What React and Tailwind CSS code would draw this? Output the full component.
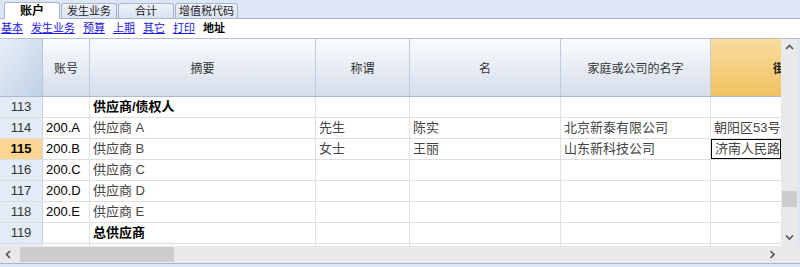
import React from "react";

const font = "font-['Liberation_Sans','Noto_Sans_CJK_SC',sans-serif]";

const tabs = ["账户", "发生业务", "合计", "增值税代码"];
const links = ["基本", "发生业务", "预算", "上期", "其它", "打印"];

const columns = [
  { label: "账号", w: "w-[47px]" },
  { label: "摘要", w: "w-[226px]" },
  { label: "称谓", w: "w-[94px]" },
  { label: "名", w: "w-[151px]" },
  { label: "家庭或公司的名字", w: "w-[150px]" },
];

const rows = [
  { n: 113, cells: ["", "供应商/债权人", "", "", "", ""], bold: true },
  { n: 114, cells: ["200.A", "供应商 A", "先生", "陈实", "北京新泰有限公司", "朝阳区53号"] },
  { n: 115, cells: ["200.B", "供应商 B", "女士", "王丽", "山东新科技公司", "济南人民路"], current: true },
  { n: 116, cells: ["200.C", "供应商 C", "", "", "", ""] },
  { n: 117, cells: ["200.D", "供应商 D", "", "", "", ""] },
  { n: 118, cells: ["200.E", "供应商 E", "", "", "", ""] },
  { n: 119, cells: ["", "总供应商", "", "", "", ""], bold: true },
];

const widths = ["w-[47px]", "w-[226px]", "w-[94px]", "w-[151px]", "w-[150px]", "w-[70px]"];

const Chevron = ({ dir }) => {
  const d = {
    up: "M1 5 L4.5 1.5 L8 5",
    down: "M1 1.5 L4.5 5 L8 1.5",
    left: "M5 1 L1.5 4.5 L5 8",
    right: "M1.5 1 L5 4.5 L1.5 8",
  }[dir];
  const vert = dir === "up" || dir === "down";
  return (
    <svg width={vert ? 9 : 7} height={vert ? 7 : 9} viewBox={vert ? "0 0 9 7" : "0 0 7 9"}>
      <path d={d} fill="none" stroke="#555" strokeWidth="1.6" />
    </svg>
  );
};

export default function App() {
  return (
    <div className={`w-[800px] h-[267px] bg-[#dce6f7] overflow-hidden flex flex-col ${font}`}>
      {/* tab strip */}
      <div className="h-[19px] flex items-end pl-[4px] gap-[1px] border-b border-[#a9b6c8]">
        {tabs.map((t, i) => (
          <div
            key={t}
            className={
              i === 0
                ? "h-[17px] w-[56px] -mb-px bg-white border border-b-0 border-[#a9b6c8] rounded-t-[3px] flex items-center justify-center text-[12px] font-bold text-black"
                : "h-[15px] min-w-[56px] px-[3px] bg-gradient-to-b from-[#eef3fb] to-[#d9e3f3] border border-b-0 border-[#a9b6c8] rounded-t-[3px] flex items-center justify-center text-[11px] text-[#222]"
            }
          >
            {t}
          </div>
        ))}
      </div>

      {/* sub links */}
      <div className="h-[19px] bg-white flex items-center gap-[8px] pl-[1px] text-[11px] leading-none">
        {links.map((l) => (
          <span key={l} className="text-[#1a1ae0] underline">
            {l}
          </span>
        ))}
        <span className="font-bold text-black">地址</span>
      </div>

      {/* grid + vertical scrollbar */}
      <div className="flex h-[208px] border-t border-[#b4bfce] bg-white">
        <div className="w-[781px] flex flex-col overflow-hidden">
          {/* header */}
          <div className="flex h-[58px] shrink-0 border-b border-[#a9b9d0]">
            <div className="w-[43px] shrink-0 bg-gradient-to-br from-[#e9eff8] to-[#bfd0e6] border-r border-[#b7c6db]" />
            {columns.map((c) => (
              <div
                key={c.label}
                className={`${c.w} shrink-0 bg-gradient-to-b from-[#f9fbfe] to-[#d6deeb] border-r border-[#bccbe0] flex items-center justify-center text-[12px] text-[#333] pt-[3px]`}
              >
                {c.label}
              </div>
            ))}
            <div className="w-[70px] shrink-0 bg-gradient-to-b from-[#f8dc9c] to-[#f0c261] flex items-center justify-end text-[12px] text-[#222] font-bold overflow-hidden pt-[3px]">
              <span className="w-[8px] overflow-hidden whitespace-nowrap">街</span>
            </div>
          </div>

          {/* rows */}
          {rows.map((r) => (
            <div key={r.n} className="flex h-[21px] shrink-0 border-b border-[#dedede]">
              <div
                className={`w-[43px] shrink-0 flex items-center justify-center text-[13px] border-r border-[#c6d4e6] ${
                  r.current ? "bg-[#fbd591] font-bold text-black" : "bg-[#e3ebf6] text-[#333]"
                }`}
              >
                {r.n}
              </div>
              {r.cells.map((v, i) => (
                <div
                  key={i}
                  className={`${widths[i]} shrink-0 flex items-center pl-[3px] text-[13px] whitespace-nowrap overflow-hidden ${
                    i < 5 ? "border-r border-[#e2e2e2]" : ""
                  } ${r.bold ? "font-bold text-black" : i === 0 ? "text-black" : "text-[#444]"} ${
                    r.current && i === 5 ? "border border-black" : ""
                  }`}
                >
                  {v}
                </div>
              ))}
            </div>
          ))}
          <div className="flex flex-1">
            <div className="w-[43px] bg-[#e3ebf6] border-r border-[#c6d4e6]" />
            <div className="w-[47px] border-r border-[#e2e2e2]" />
            <div className="w-[226px] border-r border-[#e2e2e2]" />
            <div className="w-[94px] border-r border-[#e2e2e2]" />
            <div className="w-[151px] border-r border-[#e2e2e2]" />
            <div className="w-[150px] border-r border-[#e2e2e2]" />
          </div>
        </div>

        {/* vertical scrollbar */}
        <div className="w-[17px] bg-[#e9e9e9] flex flex-col items-center">
          <div className="h-[17px] flex items-center justify-center">
            <Chevron dir="up" />
          </div>
          <div className="flex-1 w-full flex flex-col justify-end pb-[22px] px-[1px]">
            <div className="h-[16px] bg-[#cdcdcd]" />
          </div>
          <div className="h-[17px] flex items-center justify-center">
            <Chevron dir="down" />
          </div>
        </div>
        <div className="w-[2px] bg-[#dce6f7]" />
      </div>

      {/* horizontal scrollbar */}
      <div className="flex h-[17px] bg-[#e9e9e9]">
        <div className="w-[781px] flex items-center">
          <div className="w-[17px] flex justify-center">
            <Chevron dir="left" />
          </div>
          <div className="flex-1 h-full flex items-center">
            <div className="w-[154px] h-[15px] bg-[#cdcdcd] ml-[3px]" />
          </div>
          <div className="w-[17px] flex justify-center">
            <Chevron dir="right" />
          </div>
        </div>
        <div className="w-[19px] bg-[#e9e9e9]" />
      </div>
      <div className="flex-1 bg-[#dce6f7] border-t border-[#a9b6c8]" />
    </div>
  );
}
